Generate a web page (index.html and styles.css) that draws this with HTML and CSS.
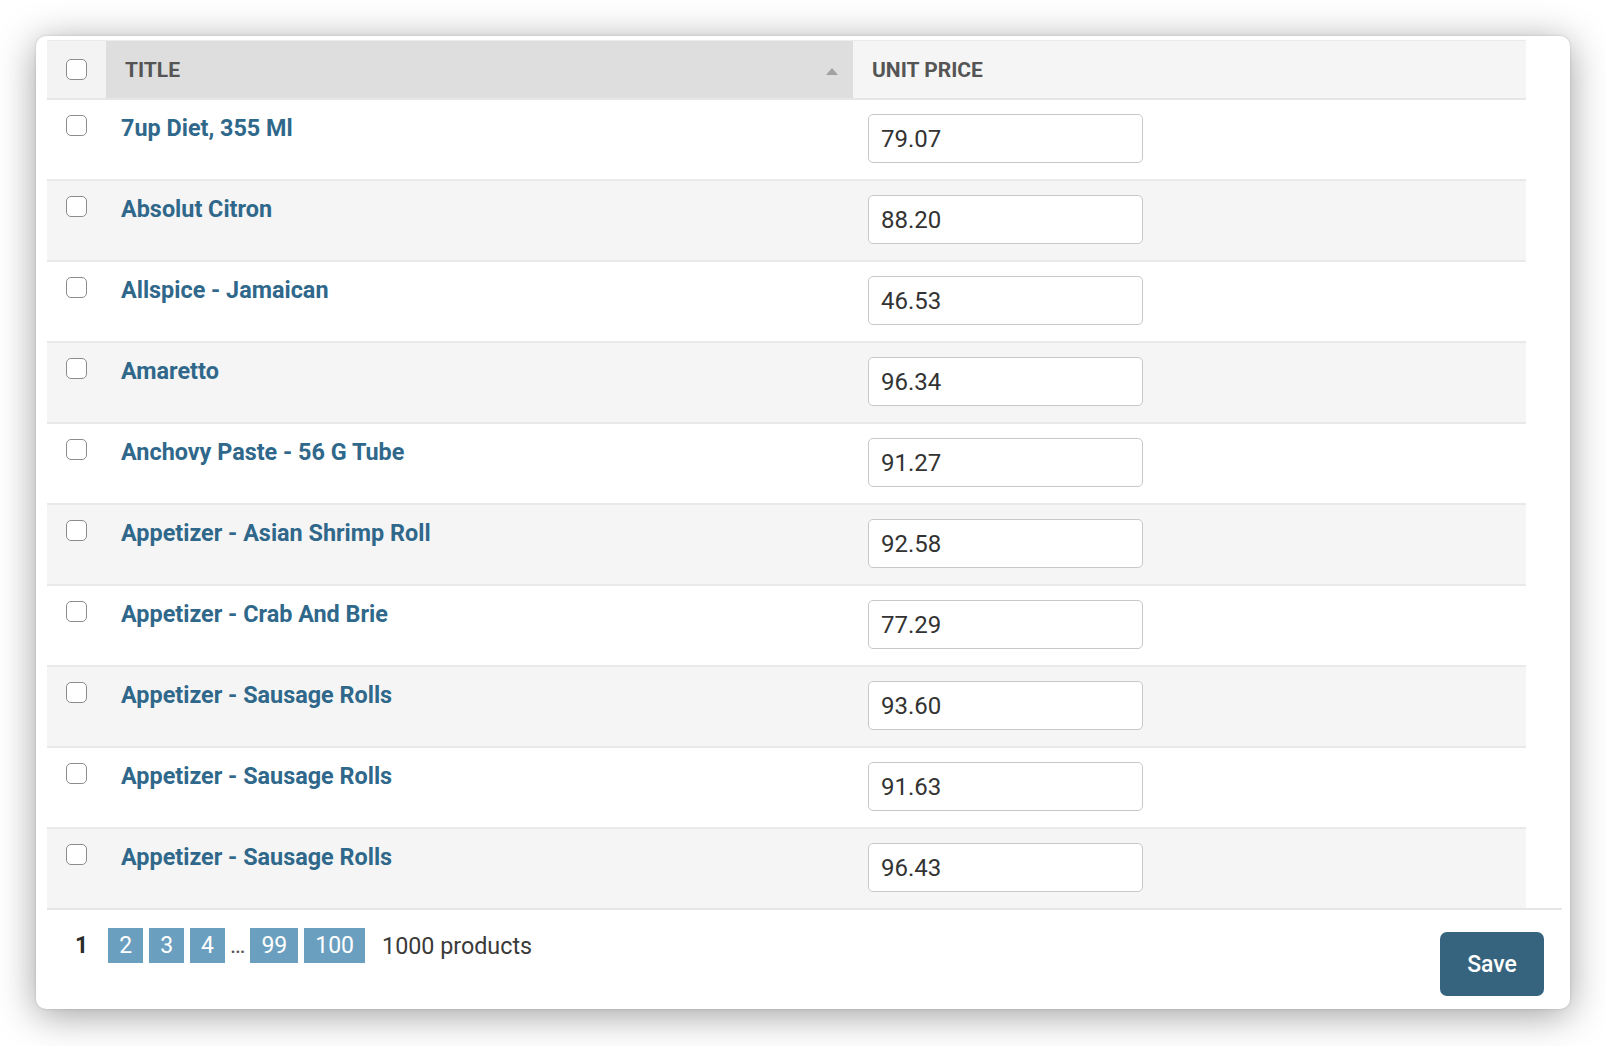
FILE: index.html
```html
<!DOCTYPE html>
<html lang="en">
<head>
<meta charset="utf-8">
<title>Products</title>
<link rel="stylesheet" href="styles.css">
</head>
<body>
<div class="window">
  <div class="results">
    <div class="head">
      <div class="th th-check"><input type="checkbox" class="cb"></div>
      <div class="th th-title sorted"><span>Title</span><span class="sort-up"></span></div>
      <div class="th th-price"><span>Unit price</span></div>
    </div>
    <div class="row"><div class="cell c-check"><input type="checkbox" class="cb"></div><div class="cell c-title"><a href="#">7up Diet, 355 Ml</a></div><div class="cell c-price"><input class="price" type="text" value="79.07"></div></div>
    <div class="row"><div class="cell c-check"><input type="checkbox" class="cb"></div><div class="cell c-title"><a href="#">Absolut Citron</a></div><div class="cell c-price"><input class="price" type="text" value="88.20"></div></div>
    <div class="row"><div class="cell c-check"><input type="checkbox" class="cb"></div><div class="cell c-title"><a href="#">Allspice - Jamaican</a></div><div class="cell c-price"><input class="price" type="text" value="46.53"></div></div>
    <div class="row"><div class="cell c-check"><input type="checkbox" class="cb"></div><div class="cell c-title"><a href="#">Amaretto</a></div><div class="cell c-price"><input class="price" type="text" value="96.34"></div></div>
    <div class="row"><div class="cell c-check"><input type="checkbox" class="cb"></div><div class="cell c-title"><a href="#">Anchovy Paste - 56 G Tube</a></div><div class="cell c-price"><input class="price" type="text" value="91.27"></div></div>
    <div class="row"><div class="cell c-check"><input type="checkbox" class="cb"></div><div class="cell c-title"><a href="#">Appetizer - Asian Shrimp Roll</a></div><div class="cell c-price"><input class="price" type="text" value="92.58"></div></div>
    <div class="row"><div class="cell c-check"><input type="checkbox" class="cb"></div><div class="cell c-title"><a href="#">Appetizer - Crab And Brie</a></div><div class="cell c-price"><input class="price" type="text" value="77.29"></div></div>
    <div class="row"><div class="cell c-check"><input type="checkbox" class="cb"></div><div class="cell c-title"><a href="#">Appetizer - Sausage Rolls</a></div><div class="cell c-price"><input class="price" type="text" value="93.60"></div></div>
    <div class="row"><div class="cell c-check"><input type="checkbox" class="cb"></div><div class="cell c-title"><a href="#">Appetizer - Sausage Rolls</a></div><div class="cell c-price"><input class="price" type="text" value="91.63"></div></div>
    <div class="row"><div class="cell c-check"><input type="checkbox" class="cb"></div><div class="cell c-title"><a href="#">Appetizer - Sausage Rolls</a></div><div class="cell c-price"><input class="price" type="text" value="96.43"></div></div>
  </div>
  <div class="footer">
    <div class="paginator">
      <span class="this-page">1</span>
      <a class="pg" href="#">2</a>
      <a class="pg" href="#">3</a>
      <a class="pg" href="#">4</a>
      <span class="dots">…</span>
      <a class="pg" href="#">99</a>
      <a class="pg" href="#">100</a>
      <span class="count">1000 products</span>
    </div>
    <button class="save" type="button">Save</button>
  </div>
</div>
</body>
</html>
```

FILE: styles.css
```css
html, body {
  margin: 0;
  padding: 0;
  background: #ffffff;
}

body {
  font-family: Roboto, "Liberation Sans", sans-serif;
  color: #333;
  min-height: 1046px;
  padding-top: 36px;
  box-sizing: border-box;
}

.window {
  box-sizing: border-box;
  margin: 0 0 0 36px;
  width: 1534px;
  height: 973px;
  padding: 4px 8px 0 11px;
  background: #ffffff;
  border-radius: 10px;
  box-shadow: 0 6px 38px rgba(0, 0, 0, 0.38), 0 0 3px rgba(0, 0, 0, 0.14);
}

.results {
  width: 1479px;
}

.head,
.row {
  display: grid;
  grid-template-columns: 59px 747px 673px;
}

.head {
  border-top: 1px solid #ebebeb;
  border-bottom: 2px solid #e6e6e6;
  height: 57px;
}

.th {
  display: flex;
  align-items: center;
  font-size: 21px;
  font-weight: 700;
  color: #555;
  text-transform: uppercase;
  background: #f5f5f5;
}

.th-check {
  justify-content: center;
  background: #f3f3f3;
}

.th-title {
  justify-content: space-between;
  padding: 0 15px 0 19px;
  background: #dedede;
}

.th-price {
  padding-left: 19px;
}

.sort-up {
  width: 0;
  height: 0;
  border-left: 6px solid transparent;
  border-right: 6px solid transparent;
  border-bottom: 7px solid #a2a2a2;
  margin-top: 3px;
}

.row {
  height: 79px;
  border-bottom: 2px solid #e9e9e9;
  background: #ffffff;
}

.row:nth-child(odd) {
  background: #f5f5f5;
}

.row:last-child {
  border-bottom: none;
}

.cell {
  padding-top: 14px;
}

.c-check {
  display: flex;
  justify-content: center;
}

.cb {
  -webkit-appearance: none;
  appearance: none;
  box-sizing: border-box;
  width: 21px;
  height: 21px;
  margin: 1px 0 0 0;
  border: 1.5px solid #8c8c8c;
  border-radius: 5px;
  background: #ffffff;
}

.th-check .cb {
  margin: 0;
}

.c-title {
  padding-left: 15px;
  padding-top: 15px;
}

.c-title a {
  font-size: 23.4px;
  line-height: 27px;
  font-weight: 700;
  color: #2f688a;
  text-decoration: none;
}

.c-price {
  padding-left: 15px;
}

.price {
  box-sizing: border-box;
  width: 275px;
  height: 49px;
  padding: 0 12px;
  margin: 0;
  border: 1.5px solid #c8c8c8;
  border-radius: 5px;
  font-family: Roboto, "Liberation Sans", sans-serif;
  font-size: 24px;
  color: #333;
  background: #ffffff;
}

.footer {
  width: 1515px;
  border-top: 2px solid #e6e6e6;
  display: flex;
  justify-content: space-between;
  align-items: flex-start;
}

.paginator {
  display: flex;
  align-items: center;
  padding: 18px 0 0 28px;
  font-size: 23px;
  height: 35px;
}

.this-page {
  font-weight: 700;
  color: #2b2b2b;
  margin-right: 20px;
}

.pg {
  display: inline-block;
  height: 35px;
  line-height: 35px;
  padding: 0 11px;
  margin-right: 6px;
  background: #6b9fc0;
  color: #ffffff;
  text-decoration: none;
}

.dots {
  color: #555;
  margin-right: 5px;
  margin-left: -1px;
}

.count {
  margin-left: 11px;
  font-size: 23.3px;
  color: #3a3a3a;
}

.save {
  margin: 22px 18px 0 0;
  width: 104px;
  height: 64px;
  border: none;
  border-radius: 7px;
  background: #36637d;
  color: #ffffff;
  font-family: Roboto, "Liberation Sans", sans-serif;
  font-size: 23px;
  font-weight: 500;
}
```
